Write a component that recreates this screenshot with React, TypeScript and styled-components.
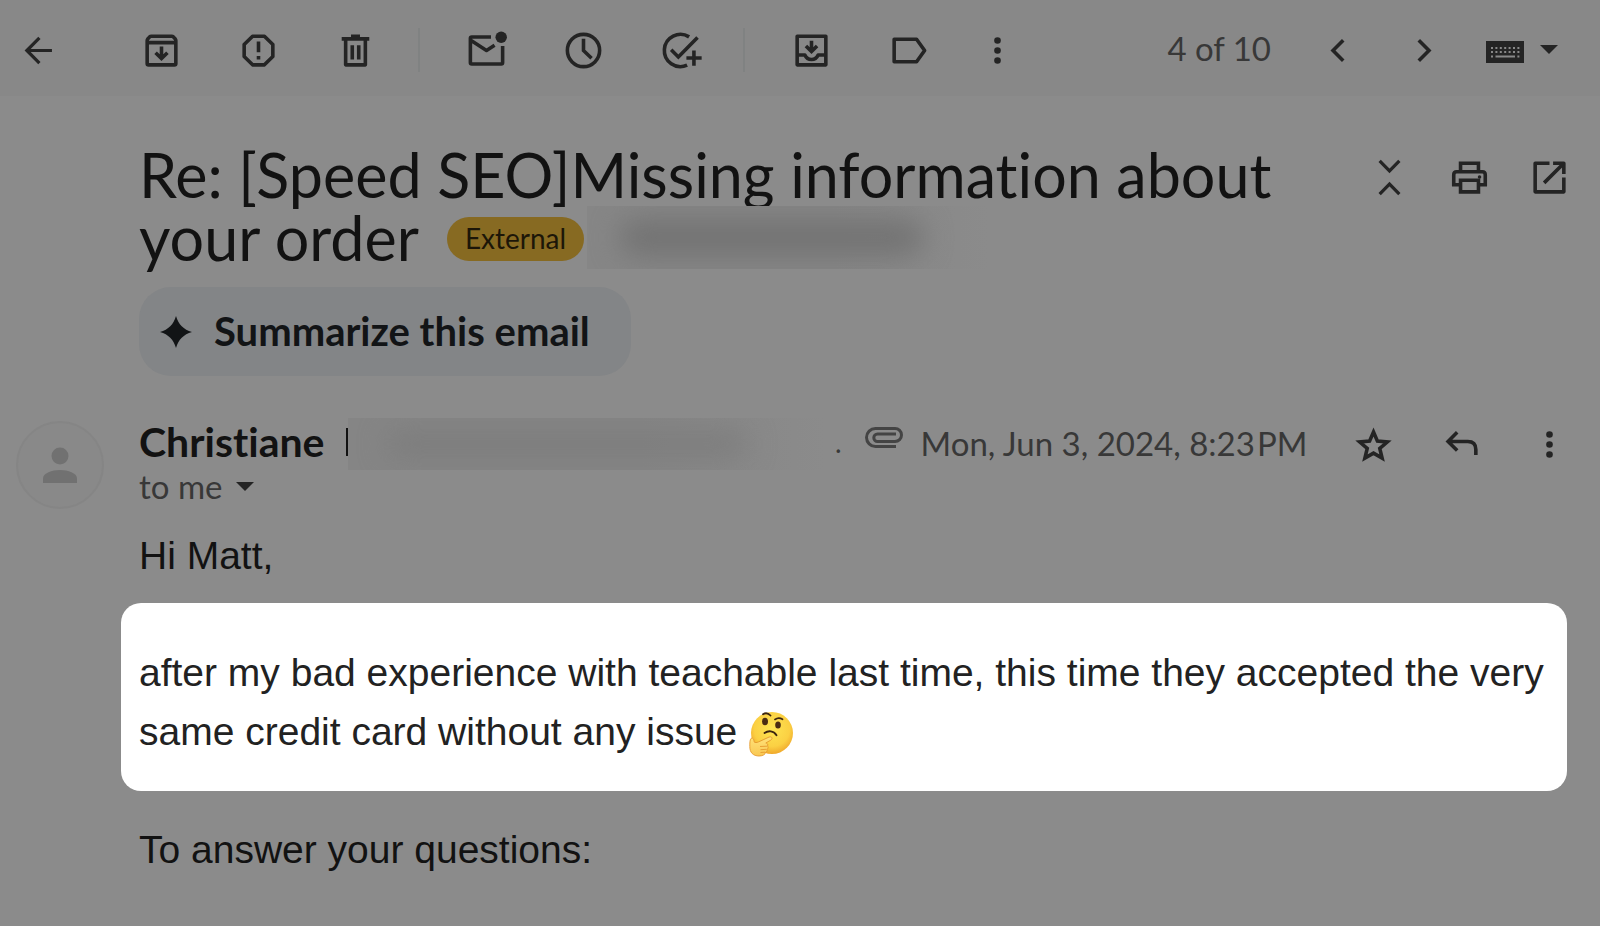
import React from "react";
import styled, { createGlobalStyle } from "styled-components";

const GlobalStyle = createGlobalStyle`
  * { box-sizing: border-box; }
  html { min-height: 100%; background: #8b8b8b; }
  body {
    margin: 0;
    background: #8b8b8b;
    color: #121212;
    font-family: Lato, "Open Sans", sans-serif;
    font-variant-ligatures: none;
  }
  h1, h2, p { margin: 0; font-weight: 400; }
`;

const ink = "#242424";

const Page = styled.div`
  min-height: 100vh;
  overflow: hidden;
`;

const Toolbar = styled.header`
  display: flex;
  align-items: center;
  height: 96px;
  padding: 4px 34px 0 0;
  background: #888888;
`;

const ToolGroup = styled.div<{ $indent?: number }>`
  display: flex;
  align-items: center;
  margin-left: ${(p) => p.$indent ?? 0}px;
`;

const IconButton = styled.button<{ $width?: number }>`
  display: flex;
  align-items: center;
  justify-content: center;
  width: ${(p) => p.$width ?? 97}px;
  height: 44px;
  flex: none;
  padding: 0;
  border: 0;
  background: transparent;
  color: ${ink};
  cursor: pointer;
`;

const Separator = styled.span`
  width: 2px;
  height: 44px;
  margin: 0 18px 0 14px;
  background: #808282;
`;

const Spacer = styled.div`
  flex: 1;
`;

const Counter = styled.span`
  font-size: 33px;
  line-height: 44px;
  color: #383838;
  margin-right: 23px;
  padding-bottom: 4px;
  white-space: nowrap;
`;

const KeyboardButton = styled(IconButton)`
  gap: 16px;
  margin-left: 10px;
  padding-top: 4px;

  svg:last-child {
    margin-bottom: 6px;
  }
`;

const Thread = styled.main`
  padding: 47px 33px 40px 139px;
`;

const SubjectRow = styled.div`
  display: flex;
  justify-content: space-between;
  align-items: flex-start;
`;

const Subject = styled.h1`
  font-size: 61px;
  line-height: 63px;
  white-space: nowrap;
`;

const Badge = styled.span`
  display: inline-block;
  height: 44px;
  margin: 11px 3px 0 28px;
  padding: 0 18px;
  border-radius: 22px;
  background: #876a22;
  color: #1c1608;
  font-size: 28px;
  line-height: 42px;
  vertical-align: top;
`;

const Redaction = styled.span<{ $width: number; $height: number; $tone: string; $base: string }>`
  position: relative;
  display: inline-block;
  flex: none;
  overflow: hidden;
  width: ${(p) => p.$width}px;
  height: ${(p) => p.$height}px;
  vertical-align: top;
  background: linear-gradient(90deg, ${(p) => p.$base} 0%, ${(p) => p.$base} 60%, #8b8b8b 98%);

  &::after {
    content: "";
    position: absolute;
    inset: 14px 18% 14px 8%;
    border-radius: 16px;
    background: ${(p) => p.$tone};
    filter: blur(14px);
  }
`;

const SubjectActions = styled.div`
  display: flex;
  padding-top: 12px;
  margin-right: -22px;
`;

const Summarize = styled.button`
  display: flex;
  align-items: center;
  gap: 22px;
  width: 492px;
  height: 89px;
  margin-top: 18px;
  padding: 0 21px;
  border: 0;
  border-radius: 32px;
  background: #838587;
  color: #121416;
  font-family: inherit;
  font-size: 40px;
  font-weight: 700;
  line-height: 48px;
  white-space: nowrap;

  span {
    padding-bottom: 2px;
  }
`;

const Sender = styled.section`
  display: flex;
  align-items: flex-start;
  margin: 42px 0 0 -123px;
`;

const Avatar = styled.div`
  display: flex;
  align-items: center;
  justify-content: center;
  width: 88px;
  height: 88px;
  flex: none;
  margin: 3px 35px 0 0;
  border: 2px solid #858585;
  border-radius: 50%;
  background: #898989;
`;

const SenderBody = styled.div`
  flex: 1;
  min-width: 0;
`;

const SenderLine = styled.div`
  display: flex;
  height: 52px;
  white-space: nowrap;
`;

const Name = styled.h2`
  flex: none;
  width: 207px;
  font-size: 41px;
  font-weight: 700;
  line-height: 48px;
`;

const Sliver = styled.span`
  flex: none;
  width: 2px;
  height: 28px;
  margin-top: 10px;
  background: #121212;
`;

const Dot = styled.span`
  font-size: 28px;
  line-height: 48px;
  color: #383838;
`;

const Attachment = styled.span`
  padding: 9px 18px 0 23px;
`;

const DateText = styled.time`
  font-size: 33px;
  line-height: 50px;
  color: #383838;
`;

const SenderActions = styled.div`
  display: flex;
  align-items: center;
  height: 36px;
  margin: 8px -26px 0 auto;
`;

const Recipient = styled.button`
  display: flex;
  align-items: center;
  gap: 14px;
  padding: 0;
  border: 0;
  background: transparent;
  color: #383838;
  font-family: inherit;
  font-size: 33px;
  line-height: 32px;
`;

const Message = styled.article`
  margin-top: 17px;
  font-family: "Liberation Sans", Arial, sans-serif;
  font-size: 39px;
  line-height: 59px;
`;

const Highlight = styled.div`
  margin: 18px 0 29px -18px;
  padding: 40px 0 30px 18px;
  border-radius: 20px;
  background: #ffffff;
  color: #222222;
  white-space: nowrap;
`;

const EmojiBox = styled.svg`
  width: 46px;
  height: 46px;
  vertical-align: -12px;
`;

const Icon = ({ children }: { children: React.ReactNode }) => (
  <svg width="43" height="43" viewBox="0 0 24 24" fill="none" stroke="currentColor" strokeWidth="2" aria-hidden="true">
    {children}
  </svg>
);

const Caret = () => (
  <svg width="18" height="9" viewBox="0 0 18 9" fill={ink} aria-hidden="true">
    <path d="M0 0h18L9 9z" />
  </svg>
);

const MoreIcon = () => (
  <Icon>
    <g fill="currentColor" stroke="none">
      <circle cx="12" cy="6.4" r="1.85" />
      <circle cx="12" cy="12" r="1.85" />
      <circle cx="12" cy="17.6" r="1.85" />
    </g>
  </Icon>
);

const Keyboard = () => (
  <svg width="38" height="22" viewBox="0 0 38 22" aria-hidden="true">
    <path fill={ink} d="M0 0h38v22H0z" />
    <g stroke="#888888" strokeWidth="2" strokeDasharray="2 2.400">
      <path d="M5 7h29M5 11h29" />
    </g>
    <path stroke="#888888" strokeWidth="2" d="M5 15.500h2M9.500 15.500h19.500M31.400 15.500h2" />
  </svg>
);

const Thinking = () => (
  <EmojiBox viewBox="0 0 46 46" role="img" aria-label="🤔">
    <defs>
      <radialGradient id="face" cx="0.5" cy="0.4" r="0.6">
        <stop offset="0" stopColor="#fde452" />
        <stop offset="0.7" stopColor="#fbd043" />
        <stop offset="1" stopColor="#f0a92c" />
      </radialGradient>
      <linearGradient id="hand" x1="0" y1="0" x2="0" y2="1">
        <stop offset="0" stopColor="#ffe27a" />
        <stop offset="1" stopColor="#f9c852" />
      </linearGradient>
    </defs>
    <circle cx="24" cy="22" r="21" fill="url(#face)" />
    <g fill="#4a2b12">
      <ellipse cx="17" cy="10.5" rx="3" ry="3.8" />
      <ellipse cx="30" cy="14" rx="2.8" ry="3.6" />
    </g>
    <g fill="none" stroke="#3c2410" strokeLinecap="round">
      <path d="M15 3.2c3-1.8 5.500-.8 7.500 1.300" strokeWidth="1.800" />
      <path d="M27 8.400c2.500-1.800 5-1.700 7.500-.2" strokeWidth="1.800" />
      <path d="M16.500 22c4-2.700 9-2.300 12 2.200" strokeWidth="1.900" />
    </g>
    <path
      d="M3 27.500c1.800-1.200 3 .5 3 3.200 1 1.300 2.800 1 4.500.2l10.500-4.800c3-1.200 4 1.700 1.800 3l-5 2.900c1.600.2 2.700 1.500 1.700 3 .9 1 .8 2.300-.4 3.100.6 1.400-.2 2.600-1.400 3.100-.3 2.100-2.800 3.800-6.500 3.800C5 45 1.800 41.500 1.800 35.500c0-3 0-6.800 1.200-8z"
      fill="url(#hand)"
      stroke="#e59a2e"
      strokeWidth="0.9"
    />
    <path d="M12 35.500l7-.3M12.500 38.700l6-.4M12.500 41.500l4.500-.3" stroke="#e59a2e" strokeWidth="0.9" />
  </EmojiBox>
);

export default function App() {
  return (
    <Page>
      <GlobalStyle />
      <Toolbar>
        <IconButton $width={76} aria-label="Back to inbox">
          <Icon><path d="M19.500 12H6M12.500 5L5.500 12l7 7" strokeWidth="1.800" /></Icon>
        </IconButton>
        <ToolGroup $indent={37}>
          <IconButton aria-label="Archive">
            <Icon>
              <path d="M4 6.500q0-.5.3-.9L5.400 4.400Q5.800 4 6.300 4h11.400q.5 0 .9.400l1.100 1.200q.3.400.3.900v12.700q0 .8-.8.800H4.800q-.8 0-.8-.8zM4 7.600h16" strokeLinejoin="round" />
              <path d="M12 9.800v6.200M8.700 13.200l3.300 3.300 3.300-3.300" />
            </Icon>
          </IconButton>
          <IconButton aria-label="Report spam">
            <Icon>
              <path d="M8.700 4h6.600L20 8.700v6.600L15.300 20H8.700L4 15.300V8.700z" strokeLinejoin="round" />
              <path d="M12 7v6M12 15v2" />
            </Icon>
          </IconButton>
          <IconButton aria-label="Delete">
            <Icon>
              <path d="M4.300 5.500h15.400M9.500 4h5M6.500 6v14h11V6M10.200 9v8M13.800 9v8" strokeLinejoin="round" />
            </Icon>
          </IconButton>
          <Separator />
          <IconButton aria-label="Mark as unread">
            <Icon>
              <path d="M14.500 4.500H3.800q-.8 0-.8.800v13.400q0 .8.800.8h16.400q.8 0 .8-.8V9.500M3 6.200l9 5.800 4.500-2.900" strokeLinejoin="round" />
              <circle cx="20.200" cy="4.600" r="3.200" fill="currentColor" stroke="none" />
            </Icon>
          </IconButton>
          <IconButton aria-label="Snooze">
            <Icon>
              <circle cx="12" cy="12" r="9" />
              <path d="M12 5.500V12l4.500 4.300" />
            </Icon>
          </IconButton>
          <IconButton aria-label="Add to tasks">
            <Icon>
              <path d="M16.800 4.400A9 9 0 1 0 15.700 20.200" />
              <path d="M6.800 11.600l4 4L21.500 4.700M19.500 12v8.500M15.300 16.200h8.500" />
            </Icon>
          </IconButton>
          <Separator />
          <IconButton aria-label="Move to">
            <Icon>
              <path d="M4 4h16v16H4zM4 14.500h4.300c.7 1.600 2 2.500 3.700 2.500s3-.9 3.700-2.500H20" strokeLinejoin="round" />
              <path d="M12 6.500v5.800M8.900 9.500l3.100 3.100 3.100-3.100" />
            </Icon>
          </IconButton>
          <IconButton aria-label="Labels">
            <Icon><path d="M4 5.700h12.500L21 12l-4.500 6.300H4z" strokeLinejoin="round" /></Icon>
          </IconButton>
          <IconButton $width={80} aria-label="More"><MoreIcon /></IconButton>
        </ToolGroup>
        <Spacer />
        <Counter>4 of 10</Counter>
        <IconButton $width={87} aria-label="Newer">
          <Icon><path d="M15.200 6.300L9.500 12l5.700 5.700" /></Icon>
        </IconButton>
        <IconButton $width={87} aria-label="Older">
          <Icon><path d="M8.800 6.300l5.700 5.700-5.700 5.700" /></Icon>
        </IconButton>
        <KeyboardButton $width={88} aria-label="Input tools">
          <Keyboard />
          <Caret />
        </KeyboardButton>
      </Toolbar>

      <Thread>
        <SubjectRow>
          <Subject>
            Re: [Speed SEO]Missing information about
            <br />
            your order<Badge>External</Badge>
            <Redaction $width={410} $height={63} $base="#868686" $tone="#727272" aria-hidden="true" />
          </Subject>
          <SubjectActions>
            <IconButton $width={80} aria-label="Collapse all">
              <Icon><path d="M6.500 2.700l5.500 5.600 5.500-5.600M6.500 21.300l5.500-5.600 5.500 5.600" strokeWidth="1.800" /></Icon>
            </IconButton>
            <IconButton $width={80} aria-label="Print all">
              <Icon>
                <path d="M7 8V4h10v4M7 16H3.200v-5.500q0-1.700 1.700-1.700h14.200q1.700 0 1.700 1.700V16H17M7 13.500h10V20H7z" />
                <circle cx="17.600" cy="11.700" r="1" fill="currentColor" stroke="none" />
              </Icon>
            </IconButton>
            <IconButton $width={80} aria-label="In new window">
              <Icon>
                <path d="M12 4H4v16h16v-8M14 4h6v6M20 4L9 15" strokeLinejoin="round" />
              </Icon>
            </IconButton>
          </SubjectActions>
        </SubjectRow>

        <Summarize>
          <svg width="32" height="32" viewBox="0 0 32 32" fill="currentColor" aria-hidden="true">
            <path d="M16 0C18.500 8.500 23.500 13.500 32 16 23.500 18.500 18.500 23.500 16 32 13.500 23.500 8.500 18.500 0 16 8.500 13.500 13.500 8.500 16 0z" />
          </svg>
          <span>Summarize this email</span>
        </Summarize>

        <Sender>
          <Avatar>
            <svg width="34" height="37" viewBox="0 0 34 37" fill="#717171" aria-hidden="true">
              <circle cx="17" cy="9" r="8.500" />
              <path d="M0 36v-4.500C0 26 9 23 17 23s17 3 17 8.500V36z" />
            </svg>
          </Avatar>
          <SenderBody>
            <SenderLine>
              <Name>Christiane</Name>
              <Sliver />
              <Redaction $width={487} $height={52} $base="#858585" $tone="#7c7c7c" aria-hidden="true" />
              <Dot>.</Dot>
              <Attachment>
                <svg width="38" height="21" viewBox="0 0 38 21" fill="none" stroke="#444444" strokeWidth="3" aria-label="Attachment" role="img">
                  <path d="M31 19.500H10.500a9 9 0 0 1 0-18H30a6.500 6.500 0 0 1 0 13H12.500a3.700 3.700 0 0 1 0-7.400H31" />
                </svg>
              </Attachment>
              <DateText dateTime="2024-06-03T20:23">Mon, Jun 3, 2024, 8:23{"\u200a"}PM</DateText>
              <SenderActions>
                <IconButton $width={88} aria-label="Star">
                  <Icon><path d="M12 5l2.200 5.100 5.500.5-4.200 3.600 1.300 5.400L12 16.800l-4.800 2.800 1.300-5.400-4.200-3.600 5.500-.5z" /></Icon>
                </IconButton>
                <IconButton $width={88} aria-label="Reply">
                  <Icon><path d="M9.600 5.200L4.500 10.300l5.100 5.100M5 10.300h10.500q4.500 0 4.500 4.500v3" /></Icon>
                </IconButton>
                <IconButton $width={88} aria-label="More message options"><MoreIcon /></IconButton>
              </SenderActions>
            </SenderLine>
            <Recipient>to me <Caret /></Recipient>
          </SenderBody>
        </Sender>

        <Message>
          <p>Hi Matt,</p>
          <Highlight>
            <p>
              after my bad experience with teachable last time, this time they accepted the very
              <br />
              same credit card without any issue <Thinking />
            </p>
          </Highlight>
          <p>To answer your questions:</p>
        </Message>
      </Thread>
    </Page>
  );
}
